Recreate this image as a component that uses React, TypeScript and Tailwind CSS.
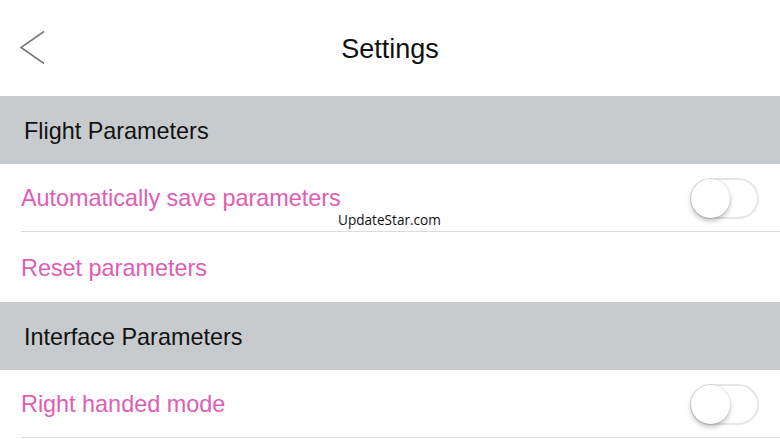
import { useState } from 'react';

const font = { fontFamily: '"Liberation Sans", Arial, sans-serif' };

function Toggle({ on, onChange }: { on: boolean; onChange: () => void }) {
  return (
    <button
      type="button"
      onClick={onChange}
      className={`relative mt-[2px] h-[41px] w-[69px] rounded-full border-2 transition-colors ${
        on ? 'border-[#4cd964] bg-[#4cd964]' : 'border-[#e6e6e6] bg-white'
      }`}
    >
      <span
        className={`absolute top-[-1px] h-[39px] w-[39px] rounded-full bg-white shadow-[0_3px_5px_rgba(0,0,0,0.25)] ring-1 ring-black/5 transition-all ${
          on ? 'left-[27px]' : 'left-[-1px]'
        }`}
      />
    </button>
  );
}

function Section({ title }: { title: string }) {
  return (
    <div className="flex h-[68px] items-center bg-[#c8cbcd] pl-[24px] pt-[3px] text-[23.4px] text-[#111]">{title}</div>
  );
}

function Row({ label, toggle, border = true }: { label: string; toggle?: boolean; border?: boolean }) {
  const [on, setOn] = useState(false);
  return (
    <div className="bg-white pl-[21px]">
      <div className={`flex h-[68px] items-center justify-between pr-[21px] ${border ? 'border-b border-[#dcdcdc]' : ''}`}>
        <span className="pt-[3px] text-[23.4px] text-[#e05db3]">{label}</span>
        {toggle && <Toggle on={on} onChange={() => setOn((v) => !v)} />}
      </div>
    </div>
  );
}

export default function App() {
  return (
    <div className="relative h-[439px] w-[780px] overflow-hidden bg-white" style={font}>
      <div className="relative flex h-[96px] items-center justify-center">
        <button type="button" className="absolute left-[19px] top-[30px]">
          <svg width="27" height="36" viewBox="0 0 27 36" fill="none">
            <path d="M25 1.5 L2 17.5 L25 33.5" stroke="#7a7a7a" strokeWidth="1.6" />
          </svg>
        </button>
        <h1 className="pt-[2px] text-[27px] text-[#111]">Settings</h1>
      </div>
      <Section title="Flight Parameters" />
      <Row label="Automatically save parameters" toggle />
      <div className="h-[1px]" />
      <Row label="Reset parameters" border={false} />
      <div className="h-[1px] bg-white" />
      <Section title="Interface Parameters" />
      <Row label="Right handed mode" toggle />
      <div className="pointer-events-none absolute left-[338px] top-[210px] text-[13.6px] text-[#111]" style={{ fontFamily: '"Open Sans", sans-serif' }}>
        UpdateStar.com
      </div>
    </div>
  );
}
